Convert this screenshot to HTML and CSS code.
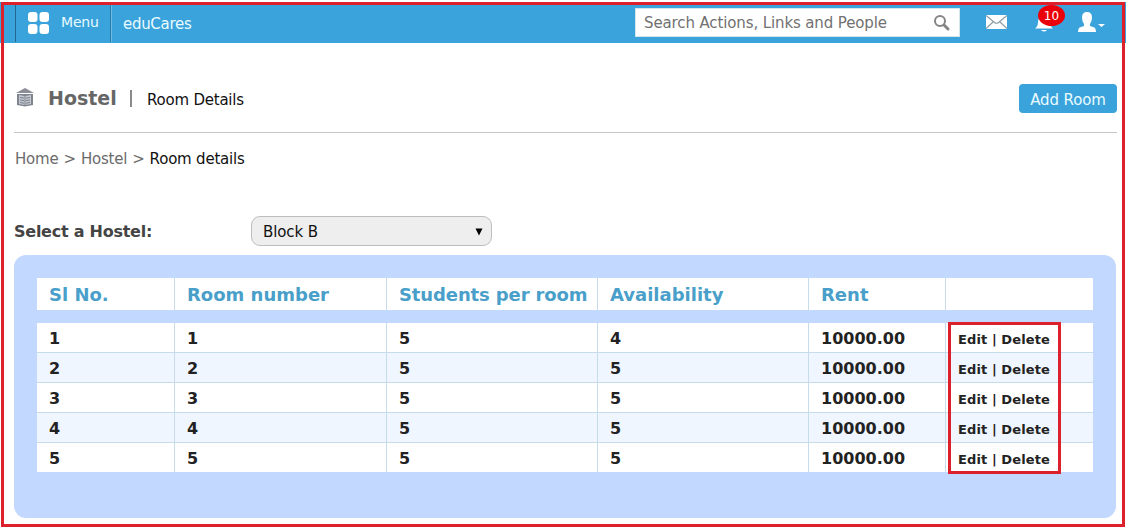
FILE: index.html
```html
<!DOCTYPE html>
<html lang="en">
<head>
<meta charset="utf-8">
<title>eduCares - Room Details</title>
<link rel="stylesheet" href="styles.css">
</head>
<body>
<header class="topbar">
  <a class="menu">
    <svg class="menu-icon" width="23" height="24" viewBox="0 0 23 24" fill="#fff"><rect x="1" y="1" width="9.5" height="10" rx="3"/><rect x="12.5" y="1" width="9.5" height="10" rx="3"/><rect x="1" y="13" width="9.5" height="10" rx="3"/><rect x="12.5" y="13" width="9.5" height="10" rx="3"/></svg>
    <span class="menu-label">Menu</span>
  </a>
  <span class="brand">eduCares</span>
  <div class="search">
    <span class="search-text">Search Actions, Links and People</span>
    <svg width="18" height="18" viewBox="0 0 18 18" fill="none" stroke="#858585"><circle cx="7" cy="7" r="5" stroke-width="2"/><path d="M11 11l4 4" stroke-width="3" stroke-linecap="round"/></svg>
  </div>
  <svg class="mail" width="21" height="14" viewBox="0 0 21 14"><rect width="21" height="14" fill="#fff"/><path d="M0 .5l8.500 7q2 1.500 4 0l8.500-7M0 13.500l7-6.500M21 13.500l-7-6.500" fill="none" stroke="#8a9da8" stroke-width="1.200"/></svg>
  <div class="alerts">
    <svg width="18" height="18" viewBox="0 0 18 18" fill="#fff"><path d="M0 14.500q3-2 3-6.500q0-6 6-7q6 1 6 7q0 4.500 3 6.500zM6 16h6q-3 3-6 0z"/></svg>
    <span class="badge">10</span>
  </div>
  <svg class="user" width="28" height="21" viewBox="0 0 28 21" fill="#fff"><path d="M4 5.500q0-5.500 5-5.500Q14 0 14 5.500q0 4-2 6.500v2l4.500 1.500q1.500 1 1.500 4.500H0q0-3.500 1.500-4.500l4.500-1.500v-2Q4 9.500 4 5.500zM20 12h7l-3.500 3z"/></svg>
</header>

<main class="page">
  <div class="heading">
    <svg class="hostel-icon" width="18" height="19" viewBox="0 0 18 19"><path d="M9 0l9 5H0z" fill="#8b8e96"/><path d="M1 6h16V17l-8 1.500L1 17z" fill="#80848f"/><path d="M3 7l5.500 1v9L3 16zM15 7L9.500 8v9l5.500-1z" fill="#c3c7d0"/><path d="M4 9.500l4 .7M4 12l4 .7M4 14.500l4 .7M14 9.500l-4 .7M14 12l-4 .7M14 14.500l-4 .7" stroke="#7c818c" fill="none"/></svg>
    <h1 class="title">Hostel</h1>
    <span class="divider"></span>
    <span class="subtitle">Room Details</span>
    <a class="add">Add Room</a>
  </div>
  <nav class="crumbs"><a>Home</a><i>&gt;</i><a>Hostel</a><i>&gt;</i><b>Room details</b></nav>
  <div class="filter">
    <span class="filter-label">Select a Hostel:</span>
    <div class="select"><span>Block B</span><svg width="8" height="8" viewBox="0 0 8 8"><path d="M.5 .5h7L4 7.500z"/></svg></div>
  </div>
  <section class="panel">
    <div class="row head"><span>Sl No.</span><span>Room number</span><span class="per-room">Students per room</span><span>Availability</span><span>Rent</span><span></span></div>
    <div class="rows">
      <div class="row"><span>1</span><span>1</span><span>5</span><span>4</span><span>10000.00</span><span class="actions">Edit | Delete</span></div>
      <div class="row"><span>2</span><span>2</span><span>5</span><span>5</span><span>10000.00</span><span class="actions">Edit | Delete</span></div>
      <div class="row"><span>3</span><span>3</span><span>5</span><span>5</span><span>10000.00</span><span class="actions">Edit | Delete</span></div>
      <div class="row"><span>4</span><span>4</span><span>5</span><span>5</span><span>10000.00</span><span class="actions">Edit | Delete</span></div>
      <div class="row"><span>5</span><span>5</span><span>5</span><span>5</span><span>10000.00</span><span class="actions">Edit | Delete</span></div>
      <div class="callout"></div>
    </div>
  </section>
</main>
<div class="frame"></div>
</body>
</html>
```
FILE: styles.css
```css
* { box-sizing: border-box; }
body { margin: 0; padding-top: 2px; height: 527px; overflow: hidden; background: #fff; font-family: "DejaVu Sans", Verdana, sans-serif; color: #222; position: relative; }
.topbar { display: flex; height: 41px; background: #3aa3dc; color: #e9fbff; align-items: flex-start; }
.menu { display: flex; margin: 3px 0 0 15px; width: 96px; height: 37px; border-left: 1px solid #23688f; border-right: 1px solid #2879a5; box-shadow: 1px 0 #6cbce5; padding-left: 11px; }
.menu-icon { margin-top: 6px; }
.menu-label { margin: 7px 0 0 11px; font-size: 14px; line-height: 20px; letter-spacing: -0.2px; }
.brand { margin: 12px 0 0 12px; font-size: 15px; line-height: 20px; width: 90px; letter-spacing: -0.3px; }
.search { margin: 6px 0 0 auto; width: 325px; height: 29px; border: 1px solid #d5e5ee; background: #fff; color: #717171; display: flex; align-items: center; padding: 0 8px; justify-content: space-between; font-size: 15px; letter-spacing: -0.12px; white-space: nowrap; }
.mail { margin: 13px 0 0 26px; }
.alerts { position: relative; margin: 12px 0 0 28px; width: 18px; height: 18px; }
.badge { position: absolute; left: 3px; top: -9px; width: 27px; height: 21px; border-radius: 50%; background: #ea0008; color: #fff; font-size: 12px; line-height: 22px; text-align: center; }
.user { margin: 10px 20px 0 25px; }
.page { padding: 41px 10px 0 14px; }
.heading { display: flex; height: 49px; width: 1103px; border-bottom: 1px solid #c4c8c9; padding-left: 2px; }
.hostel-icon { margin-top: 4px; }
.title { margin: 2px 0 0 14px; width: 82px; font-size: 19px; line-height: 24px; color: #666; }
.divider { width: 2px; height: 17px; margin-top: 6px; background: #8a8a8a; }
.subtitle { margin: 6px 0 0 15px; font-size: 15px; line-height: 20px; color: #111; letter-spacing: -0.22px; }
.add { margin-left: auto; width: 98px; height: 29px; border-radius: 4px; background: #3aa3dc; color: #e9fbff; font-size: 15px; line-height: 32px; text-align: center; letter-spacing: -0.1px; }
.crumbs { display: flex; margin: 16px 0 0 1px; height: 20px; font-size: 15px; line-height: 20px; color: #6b6b6b; letter-spacing: -0.2px; }
.crumbs i { font-style: normal; margin: 0 5px; }
.crumbs b { font-weight: normal; color: #111; }
.filter { display: flex; margin-top: 47px; height: 30px; }
.filter-label { width: 237px; font-size: 16px; font-weight: bold; line-height: 31px; color: #444; letter-spacing: -0.25px; }
.select { display: flex; width: 241px; height: 30px; border: 1px solid #bdbdbd; border-radius: 9px; background: #eee; color: #111; font-size: 15px; line-height: 30px; align-items: center; justify-content: space-between; padding: 1px 8px 0 11px; letter-spacing: -0.1px; }
.panel { margin-top: 9px; width: 1102px; height: 263px; padding: 23px; border-radius: 12px; background: #c3d8ff; }
.row { display: grid; grid-template-columns: 138px 212px 211px 211px 137px 147px; width: 1056px; height: 30px; background: #fff; font-size: 16px; font-weight: bold; line-height: 31px; border-bottom: 1px solid #c6dcea; white-space: nowrap; }
.row > span { padding-left: 12px; height: 100%; border-right: 1px solid #c6dcea; }
.row > span:last-child { border-right: 0; }
.row.head { height: 32px; border: 0; color: #499fca; font-size: 18px; line-height: 33px; }
.row > .per-room { letter-spacing: -0.12px; }
.rows { position: relative; margin-top: 13px; }
.rows .row { grid-template-rows: 100%; }
.rows .row:nth-child(even) { background: #f0f6ff; }
.rows .row:nth-child(5) { height: 29px; border: 0; }
.row > .actions { font-size: 13px; line-height: 33px; padding-left: 12px; letter-spacing: 0.1px; }
.callout { position: absolute; left: 911px; top: -1px; width: 113px; height: 152px; border: 3px solid #dc202c; }
.frame { position: absolute; left: 1px; top: 2px; width: 1124px; height: 525px; border: 3px solid #dc202c; }
```
